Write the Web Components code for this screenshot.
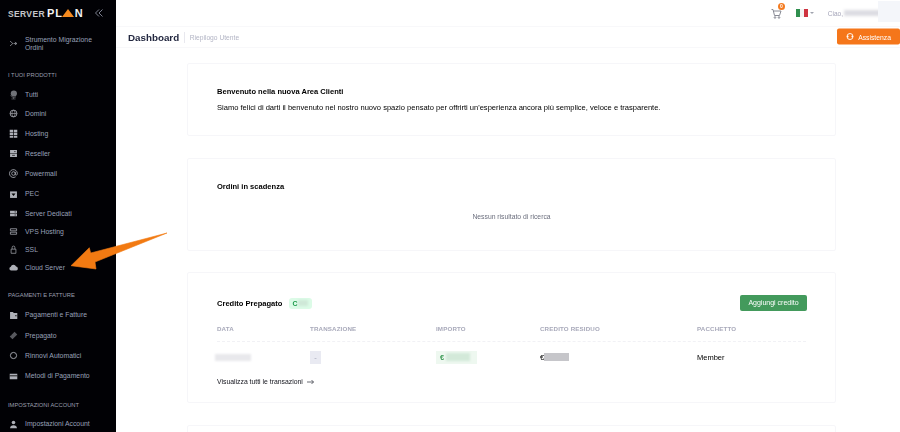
<!DOCTYPE html>
<html lang="it">
<head>
<meta charset="utf-8">
<title>Dashboard</title>
<style>
html, body { margin: 0; height: 100%; overflow: hidden; background: #fff; }
body { font-family: "Liberation Sans", Arial, sans-serif; }
</style>
</head>
<body>
<sp-app>
  <sp-sidebar slot="side">
    <sp-logo></sp-logo>
    <sp-nav-item icon="migrate" h="35">Strumento Migrazione<br>Ordini</sp-nav-item>
    <sp-nav-title h="23.5" pad="4.5">I TUOI PRODOTTI</sp-nav-title>
    <sp-nav-item icon="globe" h="19.5">Tutti</sp-nav-item>
    <sp-nav-item icon="www" h="19.5">Domini</sp-nav-item>
    <sp-nav-item icon="hosting" h="19.5">Hosting</sp-nav-item>
    <sp-nav-item icon="reseller" h="20.5">Reseller</sp-nav-item>
    <sp-nav-item icon="at" h="20.5">Powermail</sp-nav-item>
    <sp-nav-item icon="pec" h="20">PEC</sp-nav-item>
    <sp-nav-item icon="dedicated" h="19">Server Dedicati</sp-nav-item>
    <sp-nav-item icon="vps" h="17.5">VPS Hosting</sp-nav-item>
    <sp-nav-item icon="lock" h="18">SSL</sp-nav-item>
    <sp-nav-item icon="cloud" h="18.5">Cloud Server</sp-nav-item>
    <sp-nav-title h="28" pad="8">PAGAMENTI E FATTURE</sp-nav-title>
    <sp-nav-item icon="wallet" h="20">Pagamenti e Fatture</sp-nav-item>
    <sp-nav-item icon="ticket" h="20.5">Prepagato</sp-nav-item>
    <sp-nav-item icon="ring" h="20.5">Rinnovi Automatici</sp-nav-item>
    <sp-nav-item icon="card" h="20">Metodi di Pagamento</sp-nav-item>
    <sp-nav-title h="28" pad="10">IMPOSTAZIONI ACCOUNT</sp-nav-title>
    <sp-nav-item icon="user" h="20">Impostazioni Account</sp-nav-item>
  </sp-sidebar>
  <sp-topbar slot="top"></sp-topbar>
  <sp-subheader slot="top"></sp-subheader>
  <sp-card h="73" style="--mt:15px">
    <h-title>Benvenuto nella nuova Area Clienti</h-title>
    <p-text>Siamo felici di darti il benvenuto nel nostro nuovo spazio pensato per offrirti un'esperienza ancora più semplice, veloce e trasparente.</p-text>
  </sp-card>
  <sp-card h="93" style="--mt:22px">
    <h-title>Ordini in scadenza</h-title>
    <e-text>Nessun risultato di ricerca</e-text>
  </sp-card>
  <sp-card h="131" style="--mt:21px"><sp-credit></sp-credit></sp-card>
  <sp-card h="40" style="--mt:22px"></sp-card>
  <sp-arrow slot="over"></sp-arrow>
</sp-app>
<script>
const ICONS = {
  migrate: '<path d="M3 4.500 7 8l-4 3.500M8 8h4M10 6l3 2-3 2" fill="none" stroke="currentColor" stroke-width="1"/>',
  globe: '<g opacity=".65"><circle cx="8.500" cy="6.500" r="4.500"/><path d="M3.500 9.500c2 3 6 3.500 8 2M8 12v2.500M5 14.500h6" fill="none" stroke="currentColor"/></g>',
  www: '<circle cx="8" cy="8" r="5" fill="none" stroke="currentColor" stroke-width="1.200"/><path d="M3 8h10M8 3c-3 3-3 7 0 10M8 3c3 3 3 7 0 10" fill="none" stroke="currentColor" stroke-width=".9"/>',
  hosting: '<path d="M2.500 2.500h5v3.500h-5zM8.500 2.500h5v3.500h-5zM2.500 7h5v3.500h-5zM8.500 7h5v3.500h-5zM2.500 11.500h5V14h-5zM8.500 11.500h5V14h-5z"/>',
  reseller: '<path d="M3 3h10v4.500H3zM3 8.500h10V13H3z"/><path d="M9 5.200h2M6 10.700h4" stroke="#000"/>',
  at: '<circle cx="8" cy="8" r="2.600" fill="none" stroke="currentColor" stroke-width="1.200"/><path d="M10.600 5.500V9c0 2 3 2 3-1a5.700 5.700 0 1 0-2.500 4.800" fill="none" stroke="currentColor" stroke-width="1.200"/>',
  pec: '<path d="M3 3.500h10v9.500H3z"/><path d="M5 6.500h6L8 10z" fill="#000"/>',
  dedicated: '<path d="M3 4h10v3.500H3zM3 8.500h10V12H3z"/><path d="M9.500 5.700h2M9.500 10.200h2" stroke="#000"/>',
  vps: '<path d="M3.500 4h9v3h-9zM3.500 9h9v3h-9z" fill="none" stroke="currentColor" stroke-width="1.100"/>',
  lock: '<path d="M4.500 7.500h7v6h-7zM6 7.500V5a2 2 0 0 1 4 0v2.500" fill="none" stroke="currentColor" stroke-width="1"/>',
  cloud: '<path d="M4.500 12.500a2.800 2.800 0 0 1-.4-5.500 4 4 0 0 1 7.600-.4 3 3 0 0 1 .3 5.900z"/>',
  wallet: '<path d="M3 3h4l1.500 1.500h5V13H3z"/><path d="M10.500 8.500h2" stroke="#000" stroke-width="1.500"/>',
  ticket: '<path d="m9.500 2.500 4 4-7 7-4-4 1.500-1.500 1 .5-.5-1z" opacity=".5"/>',
  ring: '<circle cx="8" cy="8" r="4.500" fill="none" stroke="currentColor" stroke-width="1.300"/>',
  card: '<path d="M2.500 4h11v8h-11z"/><path d="M2.500 7h11" stroke="#000" stroke-width="1.200"/>',
  user: '<circle cx="8" cy="5" r="2.600"/><path d="M3 13.500c0-3 2-4.500 5-4.500s5 1.500 5 4.500z"/>'
};

class SpApp extends HTMLElement {
  constructor() {
    super();
    this.attachShadow({ mode: "open" }).innerHTML = `
    <style>
    :host { display: grid; grid-template-columns: 116px 1fr; grid-template-rows: auto 1fr; width: 900px; height: 432px; overflow: hidden; position: relative; filter: blur(.3px); }
    .side { grid-row: 1 / 3; }
    .top { display: block; }
    main { padding: 0 64px 0 71px; }
    </style>
    <div class="side"><slot name="side"></slot></div>
    <div class="top"><slot name="top"></slot></div>
    <main><slot></slot></main>
    <slot name="over"></slot>`;
  }
}

class SpSidebar extends HTMLElement {
  constructor() {
    super();
    this.attachShadow({ mode: "open" }).innerHTML = `
    <style>
    :host { display: block; height: 432px; overflow: hidden; background: #010105; }
    </style>
    <slot></slot>`;
  }
}

class SpLogo extends HTMLElement {
  constructor() {
    super();
    this.attachShadow({ mode: "open" }).innerHTML = `
    <style>
    :host { display: flex; align-items: center; height: 26px; padding: 0 0 0 8px; }
    .a { font: 700 8.500px "Liberation Sans", sans-serif; letter-spacing: .35px; color: #c4c5ca; transform: translateY(1px); }
    .b { display: flex; align-items: center; margin-left: 2px; font: 700 11px "Liberation Sans", sans-serif; letter-spacing: .9px; color: #f2f2f2; }
    .b i { display: block; width: 0; height: 0; margin: 0 1px 0 -1px; border-left: 6px solid transparent; border-right: 6px solid transparent; border-bottom: 8px solid #f58a1f; }
    svg { margin-left: 11px; }
    </style>
    <span class="a">SERVER</span>
    <span class="b">PL<i></i>N</span>
    <svg width="8" height="8" viewBox="0 0 8 8" fill="none" stroke="#7c8090" stroke-width="1"><path d="M4 .5.5 4 4 7.500M7.500.5 4 4l3.500 3.500"/></svg>`;
  }
}

class SpNavItem extends HTMLElement {
  constructor() {
    super();
    const icon = ICONS[this.getAttribute("icon")] || "";
    const h = this.getAttribute("h") || 20;
    this.attachShadow({ mode: "open" }).innerHTML = `
    <style>
    :host { display: flex; align-items: center; height: ${h}px; padding-left: 8px; font: 6.850px/7.500px "Liberation Sans", sans-serif; color: #98a0b8; white-space: nowrap; }
    svg { width: 11px; height: 11px; flex: none; margin-right: 6px; color: #aeb0b8; fill: currentColor; }
    </style>
    <svg viewBox="0 0 16 16">${icon}</svg>
    <span><slot></slot></span>`;
  }
}

class SpNavTitle extends HTMLElement {
  constructor() {
    super();
    this.attachShadow({ mode: "open" }).innerHTML = `
    <style>
    :host { display: flex; align-items: center; height: ${this.getAttribute("h")}px; padding: ${this.getAttribute("pad")}px 0 0 8px; box-sizing: border-box; font: 5.800px "Liberation Sans", sans-serif; color: #9a9fad; white-space: nowrap; }
    </style>
    <slot></slot>`;
  }
}

class SpTopbar extends HTMLElement {
  constructor() {
    super();
    this.attachShadow({ mode: "open" }).innerHTML = `
    <style>
    :host { display: flex; align-items: center; justify-content: flex-end; height: 26px; border-bottom: 1px solid #f8f8fa; font: 6.500px "Liberation Sans", sans-serif; color: #a4a4b8; position: relative; }
    .cart { position: relative; width: 11px; height: 11px; margin-right: 14px; color: #7d7f8a; }
    .cart b { position: absolute; left: 7px; top: -5px; width: 7px; height: 7px; border-radius: 50%; background: #f47b20; color: #fff; font: 700 5px/7px "Liberation Sans", sans-serif; text-align: center; }
    .flag { display: flex; width: 12px; height: 8px; }
    .flag i { flex: 1; }
    .caret { width: 0; height: 0; margin: 0 14px 0 2px; border: 2px solid transparent; border-top: 2.500px solid #a0a3ae; border-bottom: 0; }
    .blur { width: 47px; height: 6px; margin-left: 1px; background: #dcdce2; filter: blur(1.500px); }
    .end { width: 22px; height: 21px; margin-left: -13px; margin-top: -4px; background: #f4f6fa; filter: blur(.5px); }
    </style>
    <div class="cart">
      <svg width="11" height="11" viewBox="0 0 11 11" fill="none" stroke="currentColor" stroke-width=".9"><path d="M.5 1.500h1.500l1.500 6h5l1.500-4.500H2.500"/><circle cx="4" cy="9.500" r=".8"/><circle cx="8" cy="9.500" r=".8"/></svg>
      <b>0</b>
    </div>
    <div class="flag"><i style="background:#2f8f4e"></i><i style="background:#f3f3f3"></i><i style="background:#cf3340"></i></div>
    <div class="caret"></div>
    <span>Ciao,</span>
    <div class="blur"></div>
    <div class="end"></div>`;
  }
}

class SpSubheader extends HTMLElement {
  constructor() {
    super();
    this.attachShadow({ mode: "open" }).innerHTML = `
    <style>
    :host { display: flex; align-items: center; height: 20px; padding: 0 0 0 12px; border-bottom: 1px solid #f8f8fa; font-family: "Liberation Sans", sans-serif; }
    h1 { margin: 0; font-size: 9.800px; font-weight: 700; color: #232840; }
    .sep { width: 1px; height: 11px; margin: 0 5px 0 4.500px; background: #e8e8ee; }
    .sub { font-size: 6.700px; color: #b2b4c4; }
    .btn { display: flex; align-items: center; gap: 4px; margin-left: auto; height: 16px; padding: 0 9px 0 9px; border-radius: 2px; background: #f5761a; color: #fff; font-size: 6.800px; transform: translateY(-.5px); }
    .btn svg { display: block; }
    </style>
    <h1>Dashboard</h1>
    <div class="sep"></div>
    <span class="sub">Riepilogo Utente</span>
    <div class="btn">
      <svg width="8" height="8" viewBox="0 0 8 8" fill="none" stroke="#fff" stroke-width=".9"><circle cx="4" cy="4" r="3"/><path d="M1 4h1.500M5.500 4H7" stroke-width="1.500"/></svg>
      <span>Assistenza</span>
    </div>`;
  }
}

class SpCard extends HTMLElement {
  constructor() {
    super();
    this.attachShadow({ mode: "open" }).innerHTML = `
    <style>
    :host { display: block; box-sizing: border-box; height: ${this.getAttribute("h")}px; margin-top: var(--mt, 20px); border: 1px solid #f6f6f9; border-radius: 2px; padding: 0 29px; background: #fff; }
    </style>
    <slot></slot>`;
  }
}

class HTitle extends HTMLElement {
  constructor() {
    super();
    this.attachShadow({ mode: "open" }).innerHTML = `
    <style>
    :host { display: block; padding-top: 23px; font: 700 7.550px/9px "Liberation Sans", sans-serif; color: #000; }
    </style>
    <slot></slot>`;
  }
}

class PText extends HTMLElement {
  constructor() {
    super();
    this.attachShadow({ mode: "open" }).innerHTML = `
    <style>
    :host { display: block; padding-top: 7px; font: 7.550px/9px "Liberation Sans", sans-serif; color: #000; white-space: nowrap; }
    </style>
    <slot></slot>`;
  }
}

class EText extends HTMLElement {
  constructor() {
    super();
    this.attachShadow({ mode: "open" }).innerHTML = `
    <style>
    :host { display: block; padding-top: 21px; text-align: center; font: 6.800px/9px "Liberation Sans", sans-serif; color: #6c6f7e; }
    </style>
    <slot></slot>`;
  }
}

class SpCredit extends HTMLElement {
  constructor() {
    super();
    this.attachShadow({ mode: "open" }).innerHTML = `
    <style>
    :host { display: block; font-family: "Liberation Sans", sans-serif; }
    .head { display: flex; align-items: center; height: 20px; padding-top: 20px; }
    .head h2 { margin: 0; font-size: 7.550px; font-weight: 700; color: #000; }
    .pill { display: flex; align-items: center; width: 23px; height: 11px; margin-left: 7px; padding-left: 3px; box-sizing: border-box; border-radius: 3px; background: #dcfbe7; color: #1c9a4a; font-size: 7px; font-weight: 700; }
    .pill i { display: block; width: 10px; height: 6px; margin-left: 1px; background: #cfe8d8; filter: blur(1px); }
    .add { margin-left: auto; margin-right: -1px; width: 67px; height: 16px; line-height: 16px; text-align: center; border-radius: 2px; background: #439a5c; color: #fff; font-size: 7px; }
    .row { display: grid; grid-template-columns: 93px 126px 104px 157px 1fr; align-items: center; }
    .cols { height: 25px; margin-top: 3px; border-bottom: 1px dashed #f1f1f5; font-size: 6.200px; font-weight: 700; letter-spacing: .15px; color: #a8a9ba; }
    .body { height: 30px; font-size: 7.500px; color: #000; }
    .b { display: block; filter: blur(1px); background: #e8e8ec; }
    .date { width: 36px; height: 7px; margin-left: -2px; }
    .dash { width: 11px; height: 13px; background: #e9eaf2; color: #a3a6b8; text-align: center; line-height: 13px; }
    .imp { display: flex; align-items: center; width: 41px; height: 13px; padding-left: 4px; box-sizing: border-box; background: #eef8f0; color: #3c9a55; font-weight: 700; }
    .imp .b { width: 24px; height: 8px; margin-left: 2px; background: #d3e9d9; }
    .res { display: flex; align-items: center; }
    .res .b { width: 25px; height: 8px; background: #c6c6ca; filter: blur(.5px); }
    .link { margin-top: 6px; font-size: 6.850px; color: #14151d; display: flex; align-items: center; gap: 4px; }
    </style>
    <div class="head">
      <h2>Credito Prepagato</h2>
      <div class="pill">C<i></i></div>
      <div class="add">Aggiungi credito</div>
    </div>
    <div class="row cols"><span>DATA</span><span>TRANSAZIONE</span><span>IMPORTO</span><span>CREDITO RESIDUO</span><span>PACCHETTO</span></div>
    <div class="row body">
      <span class="b date"></span>
      <span class="dash">-</span>
      <span class="imp">€<span class="b"></span></span>
      <span class="res">€<span class="b"></span></span>
      <span>Member</span>
    </div>
    <div class="link"><span>Visualizza tutti le transazioni</span>
      <svg width="7" height="6" viewBox="0 0 7 6" fill="none" stroke="#2a2b36" stroke-width=".7"><path d="M0 3h6.500M4.500 1l2 2-2 2"/></svg>
    </div>`;
  }
}

// freccia arancione disegnata sopra lo screenshot
class SpArrow extends HTMLElement {
  constructor() {
    super();
    this.attachShadow({ mode: "open" }).innerHTML = `
    <style>
    :host { position: absolute; left: 65px; top: 226px; width: 110px; height: 50px; display: block; }
    svg { display: block; }
    </style>
    <svg width="110" height="50" viewBox="0 0 110 50">
      <path d="M102 7 25.700 27 24.300 21.700 6 39.700 31 43 30 36Z" fill="#f27a12" stroke="#f27a12" stroke-width=".6" stroke-linejoin="round"/>
    </svg>`;
  }
}

customElements.define("sp-app", SpApp);
customElements.define("sp-sidebar", SpSidebar);
customElements.define("sp-logo", SpLogo);
customElements.define("sp-nav-item", SpNavItem);
customElements.define("sp-nav-title", SpNavTitle);
customElements.define("sp-topbar", SpTopbar);
customElements.define("sp-subheader", SpSubheader);
customElements.define("sp-card", SpCard);
customElements.define("h-title", HTitle);
customElements.define("p-text", PText);
customElements.define("e-text", EText);
customElements.define("sp-credit", SpCredit);
customElements.define("sp-arrow", SpArrow);
</script>
</body>
</html>
